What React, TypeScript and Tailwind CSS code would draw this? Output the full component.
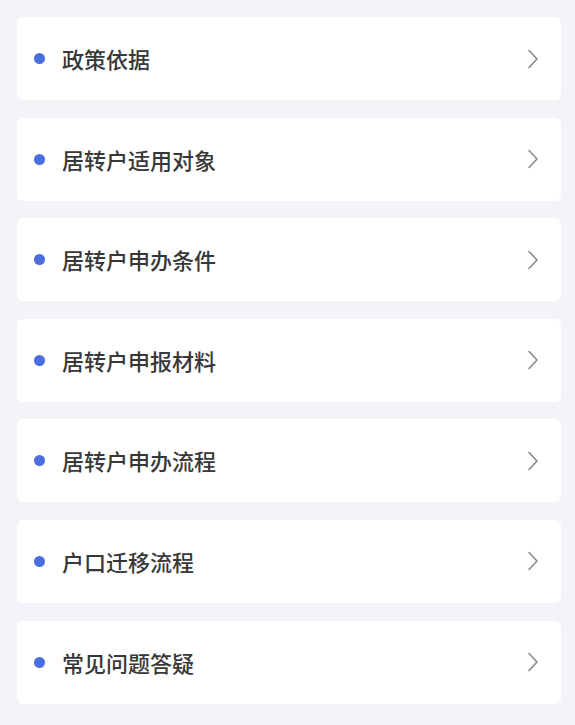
const items = [
  '政策依据',
  '居转户适用对象',
  '居转户申办条件',
  '居转户申报材料',
  '居转户申办流程',
  '户口迁移流程',
  '常见问题答疑',
];

export default function App() {
  return (
    <div
      className="min-h-screen bg-[#f3f4f8] pl-[17px] pr-[14px] pt-[17px] pb-[20px]"
      style={{ fontFamily: '"Noto Sans CJK SC", "Noto Sans", sans-serif' }}
    >
      <div className="flex flex-col gap-[17.6px]">
        {items.map((label) => (
          <div
            key={label}
            className="flex h-[83px] items-center rounded-[6px] bg-white pl-[17px] pr-[22px]"
          >
            <span className="h-[11px] w-[11px] shrink-0 rounded-full bg-[#4a6ddf]" />
            <span className="ml-[17px] flex-1 pb-[1px] text-[22px] font-medium leading-none text-[#383838]">
              {label}
            </span>
            <svg width="12" height="20" viewBox="0 0 12 20" fill="none" className="shrink-0">
              <path d="M2 1.5 L10 10 L2 18.5" stroke="#8a8a8a" strokeWidth="1.6" strokeLinecap="round" strokeLinejoin="round" />
            </svg>
          </div>
        ))}
      </div>
    </div>
  );
}
